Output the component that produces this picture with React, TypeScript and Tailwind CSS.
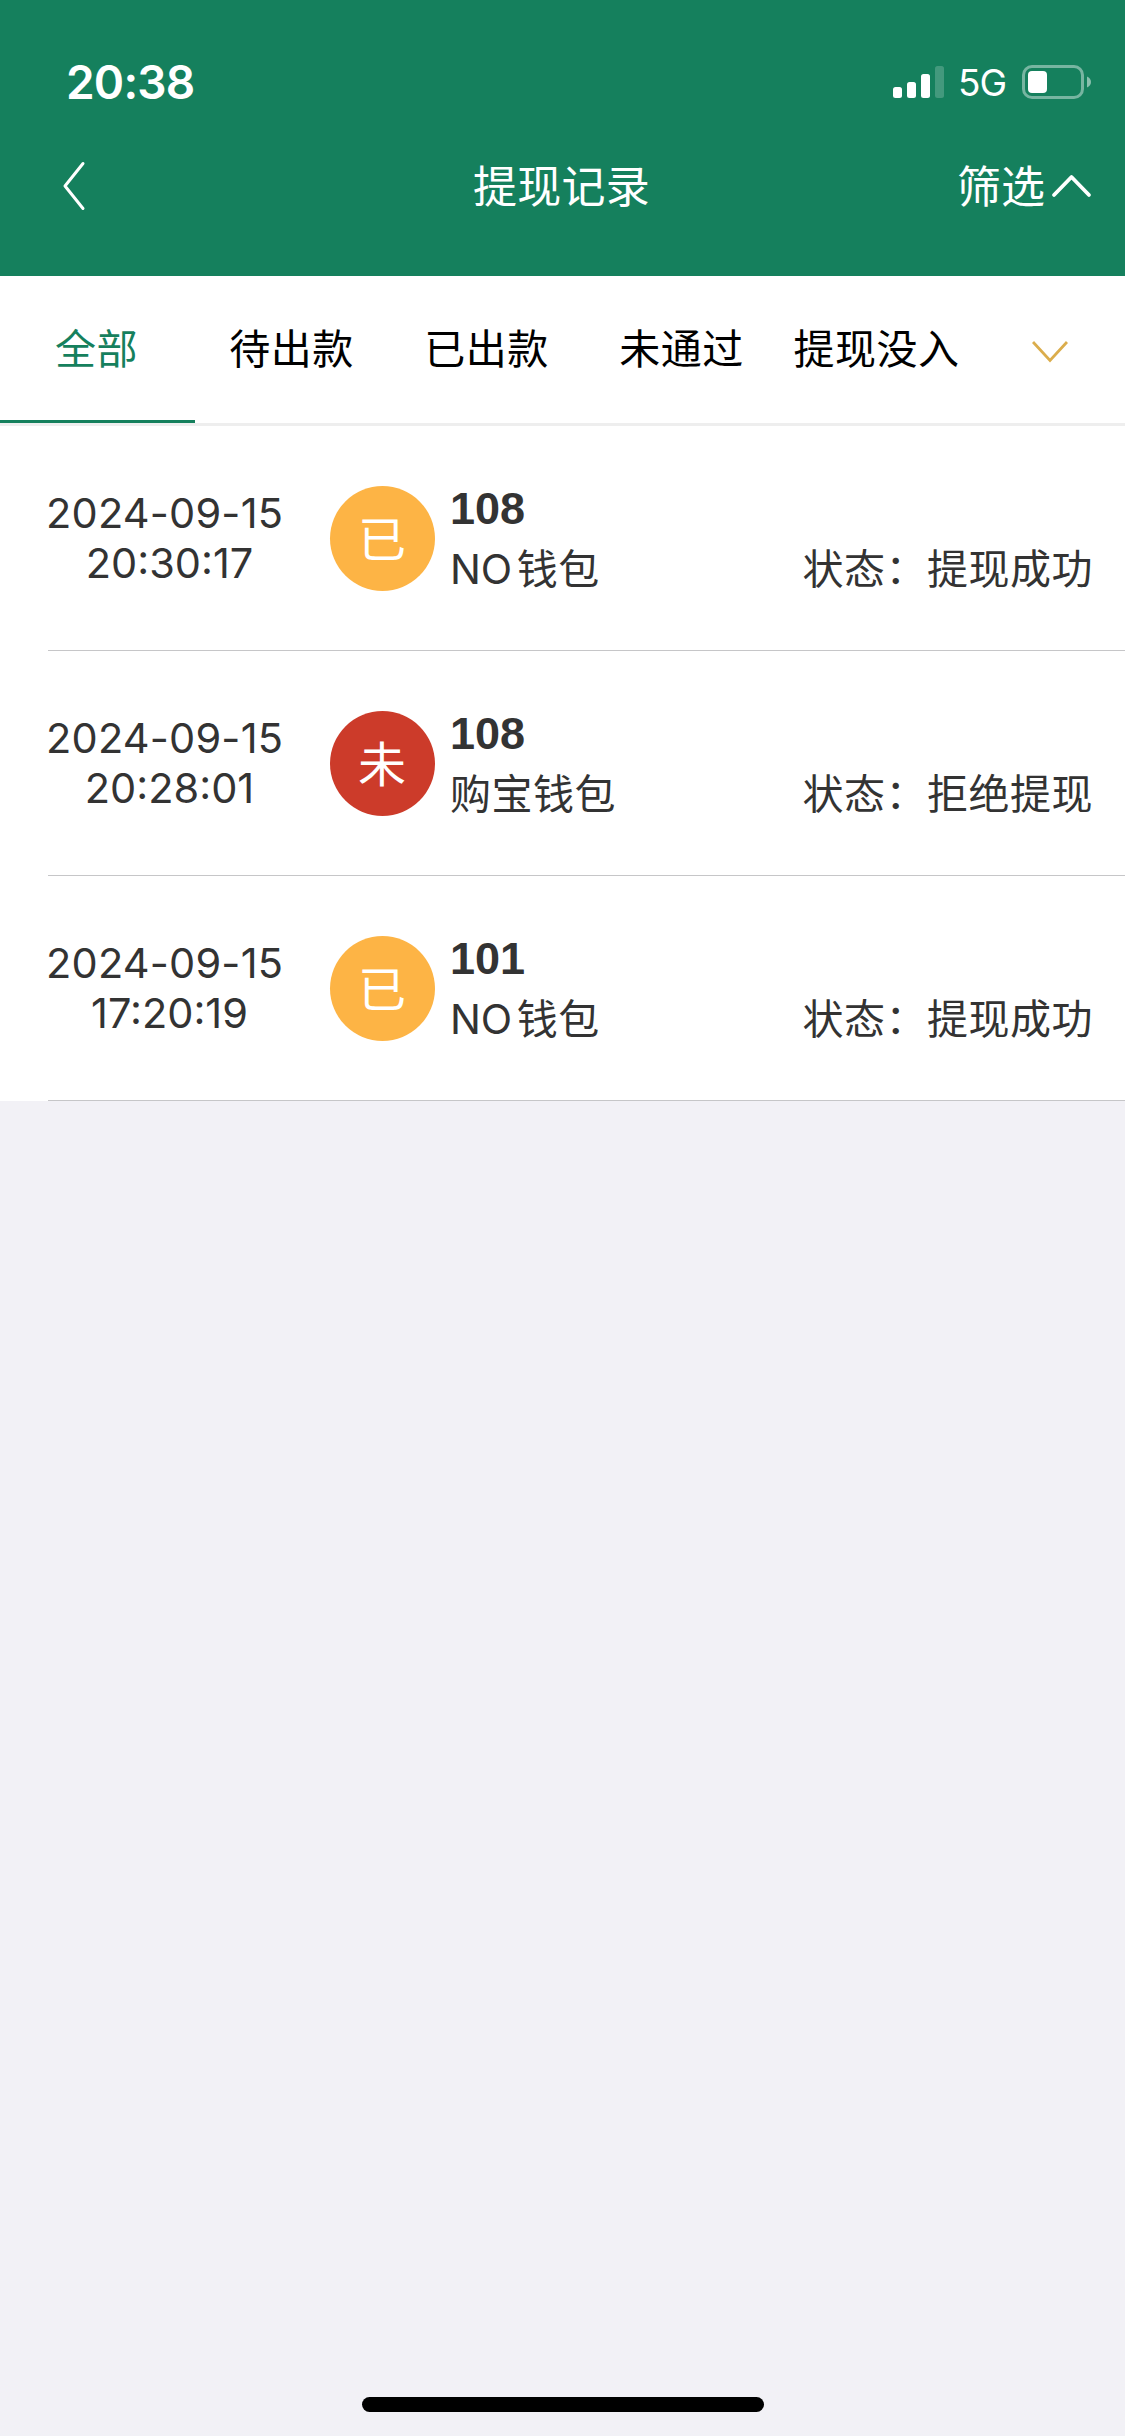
import React, { useState } from 'react';

type RecordStatus = 'paid' | 'rejected';

interface WithdrawRecord {
    id: number;
    date: string;
    time: string;
    amount: number;
    latin?: string;
    wallet: string;
    status: RecordStatus;
}

const TABS = [
    { id: 'all', label: '全部' },
    { id: 'pending', label: '待出款' },
    { id: 'paid', label: '已出款' },
    { id: 'failed', label: '未通过' },
    { id: 'forfeited', label: '提现没入' },
];

const RECORDS: WithdrawRecord[] = [
    { id: 1, date: '2024-09-15', time: '20:30:17', amount: 108, latin: 'NO', wallet: '钱包', status: 'paid' },
    { id: 2, date: '2024-09-15', time: '20:28:01', amount: 108, wallet: '购宝钱包', status: 'rejected' },
    { id: 3, date: '2024-09-15', time: '17:20:19', amount: 101, latin: 'NO', wallet: '钱包', status: 'paid' },
];

const STATUS_STYLES: Record<RecordStatus, { badge: string; label: string; color: string }> = {
    paid: { badge: '已', label: '提现成功', color: 'bg-[#fdb445]' },
    rejected: { badge: '未', label: '拒绝提现', color: 'bg-[#cc3b2a]' },
};

const StatusBar: React.FC = () => (
    <div className="flex h-[132px] items-start justify-between pl-[66px] pr-[34px] pt-[55px]">
        <span className="text-[46px] font-semibold leading-[54px] tracking-[-0.8px]">20:38</span>
        <div className="flex h-[54px] items-center">
            <svg className="h-[34px] w-[51px]" viewBox="0 0 51 34" fill="currentColor">
                <rect x="0" y="22" width="9" height="11" rx="2.5" />
                <rect x="14" y="17" width="9" height="16" rx="2.5" />
                <rect x="28" y="9" width="9" height="24" rx="2.5" />
                <rect x="42" y="1" width="9" height="32" rx="2.5" opacity="0.2" />
            </svg>
            <span className="ml-[14px] w-[49px] whitespace-nowrap pt-[2px] text-[37px] leading-[52px] tracking-[-1px]">5G</span>
            <svg className="ml-[15px] h-[34px] w-[69px]" viewBox="0 0 69 34" fill="none">
                <rect x="1.5" y="1.5" width="59" height="31" rx="8.5" stroke="currentColor" strokeWidth="3" opacity="0.42" />
                <rect x="6" y="6" width="19" height="22" rx="4" fill="currentColor" />
                <path d="M65 11.5C67.5 12.5 69 14.5 69 17C69 19.5 67.5 21.5 65 22.5Z" fill="currentColor" opacity="0.5" />
            </svg>
        </div>
    </div>
);

const RecordRow: React.FC<{ record: WithdrawRecord }> = ({ record }) => {
    const status = STATUS_STYLES[record.status];
    return (
        <li className="ml-[48px] flex h-[225px] border-b border-[#c6c6c8] text-[#333]">
            <div className="w-[234px] whitespace-nowrap pt-[62px] text-center text-[41.5px] leading-[50px]">
                <p className="-ml-[2px] tracking-[0.2px]">{record.date}</p>
                <p className="pl-[9px]">{record.time}</p>
            </div>
            <div className={`ml-[48px] mt-[60px] flex h-[105px] w-[105px] items-center justify-center rounded-full pr-px pt-[2px] text-[48px] leading-none text-white ${status.color}`}>
                {status.badge}
            </div>
            <div className="ml-[15px] flex-1 pt-[54px]">
                <p className="font-['Liberation_Sans'] text-[45px] font-bold leading-[58px]">{record.amount}</p>
                <div className="flex justify-between pr-[32px] pt-px text-[41px] leading-[60px] tracking-[0.5px]">
                    <p>
                        {record.latin && <span className="mr-[5px] tracking-[-0.2px]">{record.latin}</span>}
                        {record.wallet}
                    </p>
                    <p>状态：{status.label}</p>
                </div>
            </div>
        </li>
    );
};

const App: React.FC = () => {
    const [activeTab, setActiveTab] = useState('all');

    return (
        <div className="flex h-[2436px] w-[1125px] flex-col overflow-hidden bg-[#f2f1f6] font-[Inter,'Noto_Sans_CJK_SC',sans-serif]">
            <header className="h-[276px] bg-[#15805d] text-white">
                <StatusBar />
                <div className="grid h-[108px] grid-cols-3 items-center pl-[62px] pr-[33px] text-[44px]">
                    <button aria-label="返回">
                        <svg className="h-[50px] w-[24px]" viewBox="0 0 24 50" fill="none" stroke="currentColor" strokeWidth="3" strokeLinecap="round" strokeLinejoin="round">
                            <path d="M21 2.5L3 25L21 47.5" />
                        </svg>
                    </button>
                    <h1 className="-ml-[31px] pt-[2px] text-center tracking-[0.3px]">提现记录</h1>
                    <button className="flex items-center justify-end gap-[6px]">
                        <span className="pt-[2px]">筛选</span>
                        <svg className="h-[24px] w-[41px]" viewBox="0 0 41 24" fill="none" stroke="currentColor" strokeWidth="3.8" strokeLinecap="round" strokeLinejoin="round">
                            <path d="M3 21L20.5 3L38 21" />
                        </svg>
                    </button>
                </div>
            </header>

            <nav className="flex h-[150px] border-b-[3px] border-[#eeeeee] bg-white text-[41px] tracking-[0.5px]">
                {TABS.map(tab => (
                    <button
                        key={tab.id}
                        onClick={() => setActiveTab(tab.id)}
                        className={`w-[195px] whitespace-nowrap border-b-[3px] pr-[2px] pt-[3px] ${activeTab === tab.id ? 'border-[#15805d] text-[#15805d]' : 'border-transparent text-black'}`}
                    >
                        {tab.label}
                    </button>
                ))}
                <button aria-label="更多" className="flex flex-1 items-center justify-center pt-[4px]">
                    <svg className="h-[22px] w-[36px]" viewBox="0 0 36 22" fill="none" stroke="#dbad4c" strokeWidth="2.8">
                        <path d="M1 1L18 19.5L35 1" />
                    </svg>
                </button>
            </nav>

            <ul className="bg-white">
                {RECORDS.map(record => (
                    <RecordRow key={record.id} record={record} />
                ))}
            </ul>

            <div className="mx-auto mb-[24px] mt-auto h-[15px] w-[402px] rounded-full bg-black" />
        </div>
    );
};

export default App;
